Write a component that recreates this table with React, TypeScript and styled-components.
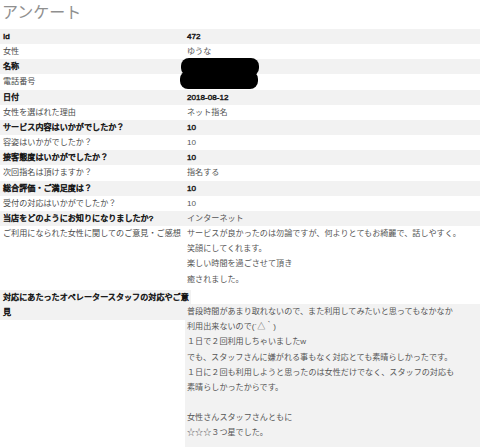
import React from "react";
import styled, { createGlobalStyle } from "styled-components";

const Global = createGlobalStyle`
  html, body { margin: 0; padding: 0; background: #fff; }
  body { font-family: "Liberation Sans", "Noto Sans CJK JP", sans-serif; }
`;

const Page = styled.div`
  position: relative;
  width: 480px;
  overflow: hidden;
`;

const Title = styled.h1`
  margin: 0 0 7px;
  padding-left: 2px;
  font-family: "Noto Sans CJK JP", sans-serif;
  font-size: 16px;
  line-height: 22px;
  font-weight: 400;
  color: #8f8f8f;
`;

const Sheet = styled.div`
  display: grid;
  grid-template-columns: 185px 1fr;
  font-size: 8.1px;
  line-height: 15.15px;
`;

const Label = styled.div<{ $shade: boolean; $strong: boolean; $overhang: boolean }>`
  align-self: start;
  box-sizing: border-box;
  width: ${(p) => (p.$overhang ? "calc(100% + 6px)" : "100%")};
  padding-left: 3px;
  background: ${(p) => (p.$shade ? "#f2f2f2" : "#ffffff")};
  color: ${(p) => (p.$strong ? "#111" : "#4a4a4a")};
  -webkit-text-stroke: ${(p) => (p.$strong ? "0.45px #111" : "0")};
  min-height: 15.15px;
`;

const Value = styled.div<{
  $shade: boolean;
  $strong: boolean;
  $drop: boolean;
  $pad: number;
}>`
  padding-left: 2px;
  margin-top: ${(p) => (p.$drop ? "14.5px" : "0")};
  padding-bottom: ${(p) => p.$pad}px;
  background: ${(p) => (p.$shade ? "#f2f2f2" : "#ffffff")};
  color: ${(p) => (p.$strong ? "#1a1a1a" : "#555")};
  -webkit-text-stroke: ${(p) => (p.$strong ? "0.45px #1a1a1a" : "0")};
  white-space: pre-line;
  min-height: 15.15px;
`;

const Redaction = styled.svg`
  position: absolute;
  left: 179px;
  top: 57px;
`;

type Row = {
  label: string;
  value: string;
  strong?: boolean;
  vstrong?: boolean;
  drop?: boolean;
  pad?: number;
};

const rows: Row[] = [
  { label: "Id", value: "472", strong: true, vstrong: true },
  { label: "女性", value: "ゆうな" },
  { label: "名称", value: "", strong: true },
  { label: "電話番号", value: "" },
  { label: "日付", value: "2018-08-12", strong: true, vstrong: true },
  { label: "女性を選ばれた理由", value: "ネット指名" },
  { label: "サービス内容はいかがでしたか？", value: "10", strong: true, vstrong: true },
  { label: "容姿はいかがでしたか？", value: "10" },
  { label: "接客態度はいかがでしたか？", value: "10", strong: true, vstrong: true },
  { label: "次回指名は頂けますか？", value: "指名する" },
  { label: "総合評価・ご満足度は？", value: "10", strong: true, vstrong: true },
  { label: "受付の対応はいかがでしたか？", value: "10" },
  { label: "当店をどのようにお知りになりましたか?", value: "インターネット", strong: true },
  {
    label: "ご利用になられた女性に関してのご意見・ご感想",
    value:
      "サービスが良かったのは勿論ですが、何よりとてもお綺麗で、話しやすく。\n笑顔にしてくれます。\n楽しい時間を過ごさせて頂き\n癒されました。",
    pad: 3,
  },
  {
    label: "対応にあたったオペレータースタッフの対応やご意見",
    value:
      "普段時間があまり取れないので、また利用してみたいと思ってもなかなか\n利用出来ないので(´△｀)\n１日で２回利用しちゃいましたw\nでも、スタッフさんに嫌がれる事もなく対応とても素晴らしかったです。\n１日に２回も利用しようと思ったのは女性だけでなく、スタッフの対応も\n素晴らしかったからです。\n\u00a0\n女性さんスタッフさんともに\n☆☆☆３つ星でした。",
    strong: true,
    drop: true,
    pad: 6,
  },
];

export default function App() {
  return (
    <Page>
      <Global />
      <Title>アンケート</Title>
      <Sheet>
        {rows.map((r, i) => {
          const shade = i % 2 === 0;
          return (
            <React.Fragment key={r.label}>
              <Label $shade={shade} $strong={!!r.strong} $overhang={!!r.drop}>
                {r.label}
              </Label>
              <Value
                $shade={shade}
                $strong={!!r.vstrong}
                $drop={!!r.drop}
                $pad={r.pad ?? 0}
              >
                {r.value || "\u00a0"}
              </Value>
            </React.Fragment>
          );
        })}
      </Sheet>
      <Redaction width="82" height="34" viewBox="0 0 82 34">
        <rect x="2" y="1" width="78" height="18" rx="8" fill="#000" />
        <rect x="1" y="14" width="78" height="18" rx="8" fill="#000" />
      </Redaction>
    </Page>
  );
}
